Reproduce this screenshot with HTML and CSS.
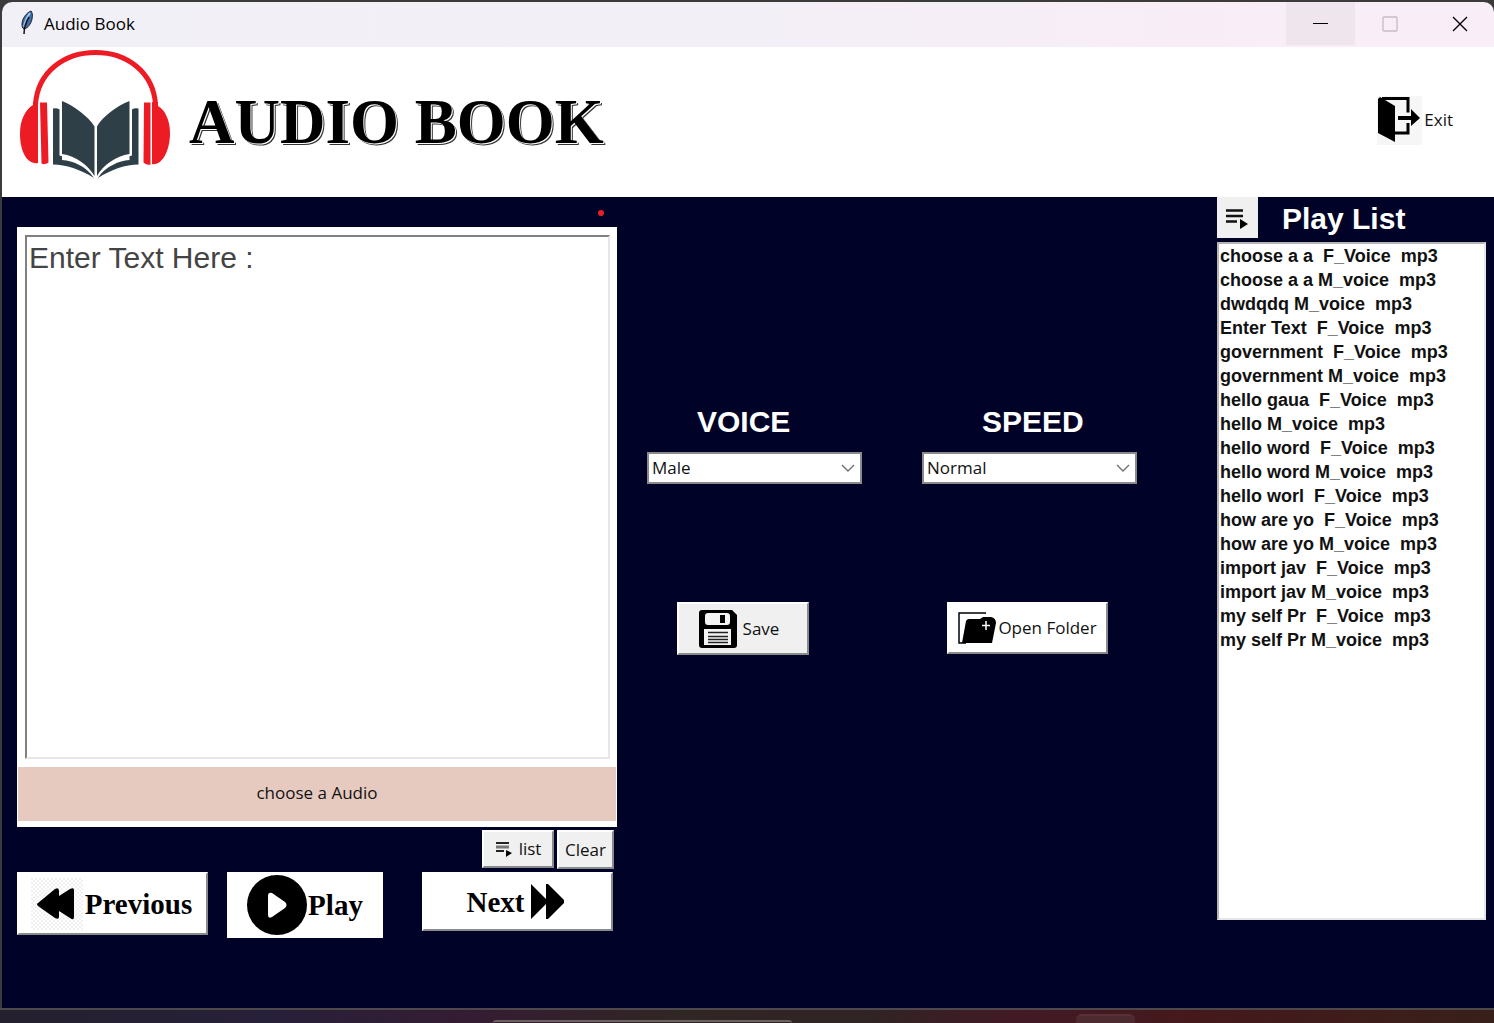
FILE: index.html
```html
<!DOCTYPE html>
<html lang="en">
<head>
<meta charset="utf-8">
<title>Audio Book</title>
<link rel="stylesheet" href="styles.css">
</head>
<body>
<div class="window">
  <div class="titlebar">
    <svg class="feather" width="16" height="26" viewBox="0 0 16 26"><path d="M13 1C8 3 4 9 4 14c0 2 0 4 2 5 4-1 7-5 8-10 1-4 0-7-1-8z" fill="#3d6ea8" stroke="#20242c" stroke-width="1"/><path d="M12 3C9 7 7 11 6 17" stroke="#9cc9f4" stroke-width="2" fill="none"/><path d="M11 7C8 12 6 17 6 24" stroke="#111" stroke-width="1.500" fill="none"/></svg>
    <span class="caption">Audio Book</span>
    <button class="sys sys-min" aria-label="Minimize"><svg width="16" height="16" viewBox="0 0 16 16"><path d="M0 7.500h15" stroke="#000"/></svg></button>
    <button class="sys" aria-label="Maximize" disabled><svg width="16" height="16" viewBox="0 0 16 16"><rect x="1" y="1" width="14" height="14" rx="1" fill="none" stroke="#c3bcc4" stroke-width="1.300"/></svg></button>
    <button class="sys" aria-label="Close"><svg width="16" height="16" viewBox="0 0 16 16"><path d="M1 1l14 14M15 1L1 15" stroke="#000" stroke-width="1.400"/></svg></button>
  </div>

  <header class="banner">
    <svg class="logo" width="154" height="134" viewBox="18 47 154 134">
      <path d="M35.500 104C38 72 64 52.500 95.500 52.500S153 72 155.500 104" fill="none" stroke="#ed1c24" stroke-width="5"/>
      <path d="M33 102h5v61C27 165 20 151 20 134c0-14 5-24 13-29z" fill="#ed1c24"/>
      <path d="M40 102.500h7l1.500 60q-4 3-7 1z" fill="#ed1c24"/>
      <path d="M158 102h-6v62c10 2 18-13 18-31 0-13-5-23-12-27z" fill="#ed1c24"/>
      <path d="M144 102.500h6.500v62q-4 1-7-2z" fill="#ed1c24"/>
      <g fill="#2f3f48">
        <path d="M62 101C74 106 88 116 94.500 126.500V176C88 165 76 156 62 154z"/>
        <path d="M129.500 101C117 106 103 116 97 126.500V176C103 165 116 156 129.500 154z"/>
        <path d="M53 108.500q4-1 6.500 1V155.500C72 159 86 166 94 178 80 169 66 165 53 164.500z"/>
        <path d="M138.500 108.500q-4-1-6.500 1V155.500C119 159 105 166 98 178 112 169 125 165 138.500 164.500z"/>
      </g>
      <path d="M62 155C76 157 88 166 94 176 84 166 74 161 62 160zM129.500 155C116 157 104 166 98 176 108 166 118 161 129.500 160z" fill="#fff"/>
    </svg>
    <h1>AUDIO BOOK</h1>
    <button class="exit">
      <svg width="45" height="49" viewBox="0 0 45 49"><path d="M0 0h45v49H0z" fill="#f6f6f6"/><path d="M5 2.500h26v14M31 27v10H16" fill="none" stroke="#000" stroke-width="3"/><path d="M1 3l2-2 15 9v36L1 37z"/><path d="M21 20h13v-7l9 9-9 8v-6H21z"/></svg>
      <span>Exit</span>
    </button>
  </header>

  <main>
    <section class="left">
      <div class="status"><span class="dot"></span></div>
      <div class="editor">
        <textarea aria-label="Text to read">Enter Text Here :</textarea>
        <div class="now">choose a Audio</div>
      </div>
      <div class="tools">
        <button class="btn tool-list"><svg width="18" height="16" viewBox="0 0 18 16"><path d="M1 2h13M1 10h8" stroke="#222" stroke-width="2.200"/><path d="M1 6h13" stroke="#777" stroke-width="3"/><path d="M11 9l6 3-6 4z"/></svg>list</button>
        <button class="btn tool-clear">Clear</button>
      </div>
      <div class="player">
        <button class="btn white prev"><svg width="52" height="52" viewBox="0 0 52 52"><defs><pattern id="dots" width="4" height="4" patternUnits="userSpaceOnUse"><path d="M0 0h2v2H0zM2 2h2v2H2z" fill="#f1f1f1"/></pattern></defs><path d="M0 0h52v52H0z" fill="url(#dots)"/><path d="M7 25L24 11q4-2 4 2v5l11-7q4-2 4 1v27q0 4-4 1l-11-7v6q0 3-4 1L7 28q-2-2 0-3z"/></svg>Previous</button>
        <button class="white play"><svg width="60" height="60" viewBox="0 0 60 60"><circle cx="30" cy="30" r="30"/><path d="M21 21q0-4 4-3l13 9q3 3 0 6L25 42q-4 2-4-2z" fill="#fff"/></svg>Play</button>
        <button class="btn white next">Next<svg width="35" height="36" viewBox="0 0 35 36"><path d="M1 0l15 15V0h2l16 16v3L18 35h-2V20L1 35z"/></svg></button>
      </div>
    </section>

    <section class="middle">
      <div class="field voice">
        <label for="voice">VOICE</label>
        <div class="combo">
          <select id="voice"><option>Male</option><option>Female</option></select>
          <svg width="14" height="8" viewBox="0 0 14 8"><path d="M1 1l6 6 6-6" fill="none" stroke="#707070" stroke-width="1.400"/></svg>
        </div>
        <button class="btn save"><svg width="38" height="38" viewBox="0 0 38 38"><path d="M3 0h30l5 5v30q0 3-3 3H3q-3 0-3-3V3q0-3 3-3z"/><path d="M9 3h19q3 0 3 3v6q0 3-3 3H9q-3 0-3-3V6q0-3 3-3zM5 19h27v16H5z" fill="#f4f4f4"/><path d="M21 5h5v8h-5z"/><path d="M9 22.500h20M9 26.500h20M9 29.500h20M9 32.500h20" stroke="#222" stroke-width="1.300"/></svg>Save</button>
      </div>
      <div class="field speed">
        <label for="speed">SPEED</label>
        <div class="combo">
          <select id="speed"><option>Normal</option><option>Fast</option><option>Slow</option></select>
          <svg width="14" height="8" viewBox="0 0 14 8"><path d="M1 1l6 6 6-6" fill="none" stroke="#707070" stroke-width="1.400"/></svg>
        </div>
        <button class="btn white open"><svg width="38" height="32" viewBox="0 0 38 32"><path d="M28 1H1v30h7" fill="none" stroke="#000" stroke-width="1.500"/><path d="M4 31l4-22q1-2 3-2h11l3-2h8q5 1 5 6l-4 20z"/><path d="M28 9v9M24 13.500h8" stroke="#fff" stroke-width="1.500"/></svg>Open Folder</button>
      </div>
    </section>

    <section class="playlist">
      <div class="head">
        <svg width="41" height="41" viewBox="0 0 41 41"><path d="M0 0h41v41H0z" fill="#f0f0f0"/><path d="M9 13.500h17M9 19h17M9 24.500h11" stroke="#111" stroke-width="2.600"/><path d="M23 22l8 5-8 5z"/></svg>
        <h2>Play List</h2>
      </div>
      <select size="17" aria-label="Play List">
        <option>choose a a&nbsp; F_Voice&nbsp; mp3</option>
        <option>choose a a M_voice&nbsp; mp3</option>
        <option>dwdqdq M_voice&nbsp; mp3</option>
        <option>Enter Text&nbsp; F_Voice&nbsp; mp3</option>
        <option>government&nbsp; F_Voice&nbsp; mp3</option>
        <option>government M_voice&nbsp; mp3</option>
        <option>hello gaua&nbsp; F_Voice&nbsp; mp3</option>
        <option>hello M_voice&nbsp; mp3</option>
        <option>hello word&nbsp; F_Voice&nbsp; mp3</option>
        <option>hello word M_voice&nbsp; mp3</option>
        <option>hello worl&nbsp; F_Voice&nbsp; mp3</option>
        <option>how are yo&nbsp; F_Voice&nbsp; mp3</option>
        <option>how are yo M_voice&nbsp; mp3</option>
        <option>import jav&nbsp; F_Voice&nbsp; mp3</option>
        <option>import jav M_voice&nbsp; mp3</option>
        <option>my self Pr&nbsp; F_Voice&nbsp; mp3</option>
        <option>my self Pr M_voice&nbsp; mp3</option>
      </select>
    </section>
  </main>
</div>
<div class="taskbar"><span class="search"></span><span class="app"></span></div>
</body>
</html>
```
FILE: styles.css
```css
* { box-sizing: border-box; }
body {
  margin: 0;
  min-height: 100vh;
  display: flex;
  flex-direction: column;
  background: #3c3b3c;
  color: #111;
  font: 17px/24px "Open Sans", "Noto Sans", sans-serif;
}
button, select, textarea { font: inherit; color: inherit; margin: 0; border-radius: 0; }
button { padding: 0; border: 0; display: flex; align-items: center; }
svg { display: block; flex: none; }

.window {
  flex: 1;
  display: flex;
  flex-direction: column;
  margin: 2px 0 0 2px;
  border-radius: 10px 10px 0 0;
  overflow: hidden;
  background: #000327;
}
.titlebar {
  display: flex;
  height: 45px;
  background: linear-gradient(90deg, #f2f0f7, #f3eff7 50%, #f9edf7 85%);
}
.feather { margin: 8px 10px 0 16px; }
.caption { flex: 1; line-height: 43px; color: #000; }
.sys { width: 69px; height: 43px; justify-content: center; background: transparent; }
.sys-min { background: #eee5ed; }
.sys:last-child { width: 70px; padding-left: 2px; }

.banner {
  display: flex;
  align-items: center;
  height: 150px;
  padding-left: 16px;
  background: #fff;
}
.logo { align-self: flex-start; }
h1 {
  flex: 1;
  margin: 0 0 0 17px;
  font: bold 63px/64px "Liberation Serif", serif;
  color: #000;
  text-shadow: 1px 1px #fff, 2px 2px #333;
}
.exit { gap: 2px; margin: 0 41px 4px 0; background: #fff; }

main {
  flex: 1;
  display: grid;
  grid-template-columns: 600px 1fr 269px;
  padding: 0 8px 70px 15px;
}
.status { display: flex; justify-content: flex-end; height: 30px; padding: 13px 13px 0 0; }
.dot { width: 6px; height: 6px; border-radius: 50%; background: #e81f24; }
.editor {
  display: flex;
  flex-direction: column;
  height: 600px;
  padding: 8px 1px 6px;
  background: #fff;
}
textarea {
  flex: 1;
  margin: 0 6px 8px 7px;
  padding: 2px;
  border: 2px solid;
  border-color: #808080 #e6e6e6 #e6e6e6 #808080;
  outline: 0;
  resize: none;
  background: #fff;
  color: #444;
  font: 30px/38px "Liberation Sans", sans-serif;
}
.now {
  height: 54px;
  line-height: 52px;
  text-align: center;
  background: #e6cac0;
}
.btn {
  justify-content: center;
  background: #f0f0f0;
  border: 2px solid;
  border-color: #fff #8a8a8a #8a8a8a #fff;
}
.white { background: #fff; }
.tools {
  display: flex;
  align-items: flex-start;
  justify-content: flex-end;
  gap: 3px;
  height: 45px;
  padding: 3px 3px 0 0;
}
.tool-list { width: 72px; height: 38px; gap: 6px; }
.tool-clear { width: 57px; height: 39px; }
.player {
  display: flex;
  align-items: flex-start;
  font: bold 29px/36px "Liberation Serif", serif;
  color: #000;
}
.prev { width: 191px; height: 63px; padding-right: 2px; gap: 2px; }
.play { width: 156px; height: 66px; gap: 1px; margin: 0 39px 0 19px; justify-content: center; }
.next { width: 191px; height: 59px; padding-right: 3px; gap: 6px; }

.middle { display: flex; gap: 60px; padding: 203px 0 0 30px; }
.field { display: flex; flex-direction: column; align-items: flex-start; width: 215px; }
.field label, h2 {
  margin: 0;
  color: #fff;
  font: bold 30px/44px "Liberation Sans", sans-serif;
}
.voice label { padding-left: 50px; }
.speed label { padding-left: 60px; }
.combo { display: grid; width: 100%; margin: 8px 0 118px; }
.combo > * { grid-area: 1 / 1; }
.combo select {
  appearance: none;
  width: 100%;
  height: 32px;
  padding: 0 3px;
  border: 2px solid #8a8a8a;
  background: #fff;
}
.combo svg { place-self: center end; margin-right: 7px; pointer-events: none; }
.save { width: 132px; height: 53px; padding-right: 8px; gap: 6px; margin-left: 30px; }
.open { width: 161px; height: 52px; gap: 2px; margin-left: 25px; }

.playlist { display: flex; flex-direction: column; }
.head { display: flex; gap: 24px; height: 45px; }
.playlist select {
  appearance: none;
  height: 678px;
  padding: 2px 0 0;
  border: 2px solid;
  border-color: #b5b5b5 #e6e6e6 #e6e6e6 #b5b5b5;
  outline: 0;
  overflow: hidden;
  background: #fff;
  color: #111;
}
.playlist option {
  height: 24px;
  padding: 0 1px;
  font: bold 18px/24px "Liberation Sans", sans-serif;
}

.taskbar {
  display: grid;
  grid-template-columns: 33fr 20fr 19fr 4fr 24fr;
  align-items: end;
  height: 15px;
  border-top: 2px solid #4c484c;
  background: linear-gradient(90deg, #24202e, #272039 18%, #351c32 32%, #302624 45%, #302424 58%, #421a26 68%, #45191c 80%, #38201a);
}
.search { grid-column: 2; height: 3px; border-top: 2px solid #6b6062; border-radius: 10px 10px 0 0; }
.app { grid-column: 4; height: 9px; border-top: 2px solid #5b3138; border-radius: 6px 6px 0 0; background: #4d2930; }
```
